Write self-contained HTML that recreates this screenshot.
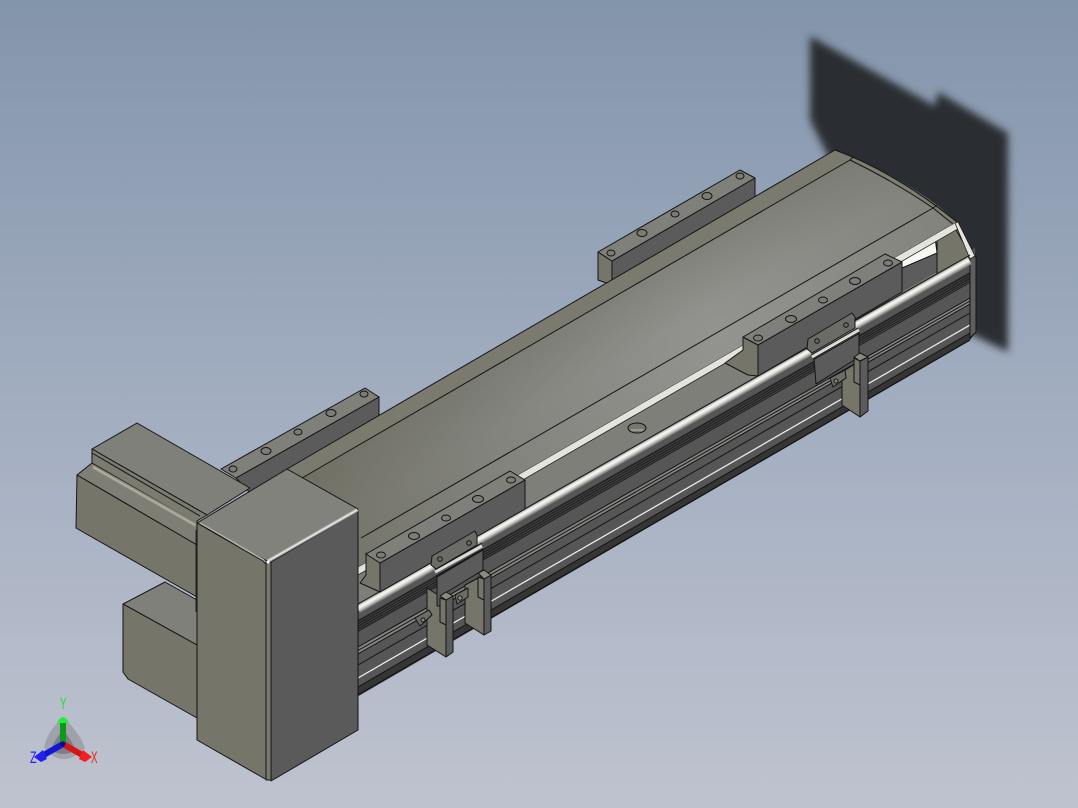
<!DOCTYPE html>
<html><head><meta charset="utf-8"><style>
html,body{margin:0;padding:0;width:1078px;height:808px;overflow:hidden;background:#a0abbd}
svg{display:block}
text{font-family:"Liberation Sans",sans-serif;font-size:16.5px}
.k{stroke:#141414;stroke-width:1;stroke-linejoin:round}
.l{stroke:#141414;stroke-width:1;fill:none}
.o{fill:#75756a}.d{fill:#5b5b5b}.t{fill:#7f807a}
.h{fill:#7c7c75;stroke:#141414;stroke-width:1}
</style></head><body>
<svg width="1078" height="808" viewBox="0 0 1078 808" xmlns="http://www.w3.org/2000/svg">
<defs>
<linearGradient id="bg" x1="0" y1="0" x2="0" y2="1"><stop offset="0" stop-color="#8395ab"/><stop offset=".5" stop-color="#a2adc0"/><stop offset="1" stop-color="#bfc3cf"/></linearGradient>
<radialGradient id="top" gradientUnits="userSpaceOnUse" cx="720" cy="340" r="430"><stop offset="0" stop-color="#93948f"/><stop offset=".5" stop-color="#858680"/><stop offset="1" stop-color="#75756a"/></radialGradient>
<linearGradient id="shade" gradientUnits="userSpaceOnUse" x1="650" y1="250" x2="690" y2="320"><stop offset="0" stop-color="#64645a" stop-opacity=".4"/><stop offset="1" stop-color="#64645a" stop-opacity="0"/></linearGradient>
<linearGradient id="rod" x1="0" y1="0" x2="0" y2="1"><stop offset="0" stop-color="#666"/><stop offset=".2" stop-color="#d8d8d4"/><stop offset=".4" stop-color="#fafaf6"/><stop offset=".65" stop-color="#d0d0cc"/><stop offset="1" stop-color="#6a6a68"/></linearGradient>
<linearGradient id="cap" x1="0" y1="0" x2="0" y2="1"><stop offset="0" stop-color="#8a8a84"/><stop offset=".5" stop-color="#f4f4f0"/><stop offset="1" stop-color="#707070"/></linearGradient>
<linearGradient id="band" x1="0" y1="0" x2="0" y2="1"><stop offset="0" stop-color="#77776c"/><stop offset=".5" stop-color="#b4b4aa"/><stop offset="1" stop-color="#78786e"/></linearGradient>
<filter id="b" x="-10%" y="-10%" width="120%" height="120%"><feGaussianBlur stdDeviation="4"/></filter>
</defs>
<rect width="1078" height="808" fill="url(#bg)"/>

<!-- shadow -->
<path d="M810 36L935 106L938 92L1008 133V352L900 300L810 120Z" fill="#2a2d32" filter="url(#b)"/>

<!-- back-right block -->
<path class="k o" d="M598 252L612 261V285L598 280Z"/>
<path class="k d" d="M612 261L755 178V205L612 290Z"/>
<path class="k t" d="M598 252L740 170L755 178L612 261Z"/>
<g class="h"><ellipse cx="611" cy="253" rx="4" ry="3"/><ellipse cx="642" cy="233" rx="5" ry="3.5"/><ellipse cx="675" cy="214" rx="4" ry="3"/><ellipse cx="707" cy="196" rx="5" ry="3.5"/><ellipse cx="740" cy="176" rx="4" ry="3"/></g>

<!-- back-left block -->
<path class="k d" d="M236 478L379 397V420L252 495Z"/>
<path class="k t" d="M221 469L365 388L379 397L236 478Z"/>
<g class="h"><ellipse cx="233" cy="469" rx="4" ry="3"/><ellipse cx="266" cy="451" rx="5" ry="3.5"/><ellipse cx="298" cy="432" rx="4" ry="3"/><ellipse cx="331" cy="413" rx="5" ry="3.5"/><ellipse cx="364" cy="394" rx="4" ry="3"/></g>

<!-- body side -->
<path d="M340 614L975 248L976 332L970 340L340 707Z" fill="#565656"/>
<path d="M358 687L970 333L976 332L970 340L358 695Z" fill="#353535"/>
<path d="M358 620L970 272V283L358 632Z" fill="#232323"/>
<g stroke="#4c4c4c" stroke-width=".7"><path d="M358 622.5L970 274.5M358 625L970 277M358 627.5L970 279.5M358 630L970 281.5"/></g>
<path d="M358 647L970 298V304L358 654Z" fill="#83837f"/>
<g class="l"><path d="M358 647L970 298M358 650.5L970 301M358 654L970 304M358 665L970 313M358 687L970 333"/></g>
<path d="M358 678L970 325" stroke="#f4f4f4" stroke-width="1.2"/>
<path d="M358 695L970 340" stroke="#111" stroke-width="1.2"/>
<path d="M970 258L976 256V332L970 338Z" fill="#5f5f5f" stroke="#141414"/>

<!-- lower surface -->
<path d="M340 585L960 228L974 254L340 618Z" fill="#7e7f78"/>
<!-- end pocket -->
<path d="M902 267L937 247V272L902 292Z" fill="#5c5c5c"/>
<path d="M937 240L955 228L971 256L937 275Z" class="k o"/>
<path d="M900 256L935 237L937 253L902 268Z" fill="#f8f8f4" stroke="#141414"/>
<!-- white strip -->
<path d="M340 577.4L955 222.6L960 227.7L340 585.4Z" fill="#e4e4dc" stroke="#222" stroke-width=".8"/>
<!-- top -->
<path d="M287 469L835 150Q895 172 957 221.5L340 577.4V560Z" fill="url(#top)"/>
<path d="M287 469L835 150Q895 172 957 221.5L340 577.4V560Z" fill="url(#shade)"/>
<path d="M287 469L835 150L853 157L302 478Z" fill="#7a7a6e"/>
<path d="M853 157Q900 178 937 205L957 222L951 226L933 208Q895 182 850 160Z" fill="#7d7d72"/>
<path class="l" d="M287 469L835 150Q895 172 957 222M302 478L850 160M361 538L933 208M850 160L853 157M933 208L937 205"/>
<path class="l" d="M850 160Q895 182 933 208L953 224"/>
<path d="M955 223L958 222L975 256L970 259Z" fill="#e6e6de" stroke="#222" stroke-width=".8"/>
<ellipse cx="637" cy="428" rx="9" ry="5" fill="#77776c" stroke="#141414"/>
<path d="M631 430h12" stroke="#9a9a90" stroke-width="2"/>
<!-- rod -->
<rect x="0" y="-4.4" width="704" height="8.8" fill="url(#rod)" transform="translate(358 609) rotate(-29.68)"/>
<path class="l" d="M358 604L970 255"/>

<!-- front block floor -->
<path class="k o" d="M366 553V575L360 583L380 592V563Z"/>
<path class="k d" d="M380 563L525 480V509L380 592Z"/>
<path class="k t" d="M366 554L510 471L525 480L380 563Z"/>
<g class="h"><ellipse cx="381" cy="555" rx="4.5" ry="3"/><ellipse cx="414" cy="536" rx="5.5" ry="3.5"/><ellipse cx="446" cy="518" rx="4.5" ry="3"/><ellipse cx="478" cy="499" rx="5.5" ry="3.5"/><ellipse cx="511" cy="480" rx="4.5" ry="3"/></g>

<!-- right block -->
<path class="k o" d="M743 337V350L725 363L748 375L758 376V345Z"/>
<path class="k d" d="M758 345L902 262V292L758 376Z"/>
<path class="k t" d="M743 337L885 254L902 262L758 345Z"/>
<g class="h"><ellipse cx="758" cy="338" rx="4.5" ry="3"/><ellipse cx="791" cy="319" rx="5.5" ry="3.5"/><ellipse cx="823" cy="300" rx="4.5" ry="3"/><ellipse cx="855" cy="281" rx="5.5" ry="3.5"/><ellipse cx="888" cy="263" rx="4.5" ry="3"/></g>

<!-- left bracket group -->
<path class="k o" d="M465 585L484 575V635L465 623Z"/>
<path class="k o" d="M427 588L446 600V657L427 645Z"/>
<path class="k" fill="#6d6d68" d="M455 595L468 588V597L457 604Z"/>
<circle cx="460" cy="598" r="2.2" fill="#8a8a82" stroke="#141414"/>
<path class="k" fill="#6d6d68" d="M415 618L429 610L432 615L420 626Z"/>
<circle cx="423" cy="620" r="2" fill="#8a8a82" stroke="#141414"/>
<path class="k d" d="M437 577L483 550V570L447 592V606L437 606Z"/>
<path class="k" fill="#6b6b67" d="M432 556L475 531L477 535V545L436 569L431 565Z"/>
<circle cx="440" cy="559" r="2.3" fill="#6b6b67" stroke="#141414"/>
<circle cx="469" cy="543" r="2.3" fill="#6b6b67" stroke="#141414"/>
<path d="M435 572L482 546" stroke="#dcdcd6" stroke-width="3"/>
<path class="l" d="M435 570L482 543M436 576L483 549"/>
<path class="k o" d="M478 577L484 579V600L478 597Z"/>
<path class="k d" d="M484 579L491 575V631L484 635Z"/>
<path class="k" fill="#8a8a80" d="M478 573L484 570L491 575L484 579Z"/>
<path class="k o" d="M440 598L446 600V625L440 622Z"/>
<path class="k d" d="M446 600L453 596V652L446 657Z"/>
<path class="k" fill="#8a8a80" d="M440 596L446 592L453 596L446 600Z"/>

<!-- right bracket group -->
<path class="k o" d="M842 372L860 361V417L842 405Z"/>
<path class="k" fill="#6d6d68" d="M830 378L845 370L846 378L833 387Z"/>
<circle cx="836" cy="381" r="2" fill="#8a8a82" stroke="#141414"/>
<path class="k d" d="M814 358L859 332V357L816 384Z"/>
<path class="k" fill="#6b6b67" d="M808 339L852 313L855 317V328L812 353L807 349Z"/>
<circle cx="817" cy="341" r="2.3" fill="#6b6b67" stroke="#141414"/>
<circle cx="846" cy="325" r="2.3" fill="#6b6b67" stroke="#141414"/>
<path d="M812 357L859 330" stroke="#dcdcd6" stroke-width="3"/>
<path class="l" d="M811 355L858 328M813 360L860 333"/>
<path class="k o" d="M854 358L860 361V385L854 382Z"/>
<path class="k d" d="M860 361L868 357V411L860 417Z"/>
<path class="k" fill="#8a8a80" d="M854 357L860 353L868 357L860 361Z"/>

<!-- left housing -->
<path class="k t" d="M137 423L250 488L207 515L92 449Z"/>
<path class="k" fill="#7b7b70" d="M92 449L207 515L197 521V535L92 470Z"/>
<path class="k" fill="#7e7e74" d="M92 463L197 524V545L77 475Z"/>
<rect x="0" y="-2.5" width="118" height="5" fill="url(#band)" transform="translate(93 467) rotate(29.6)"/>
<path class="l" d="M92 453L200 516M78 479L197 548"/>
<path class="k o" d="M77 475L197 545V597L76 528Z"/>

<!-- lower motor -->
<path class="k t" d="M165 582L197 600V645L123 604Z"/>
<path class="k o" d="M123 604L197 645V718L128 679L123 672Z"/>

<!-- end cap -->
<path class="k" fill="#81827b" d="M197 523L287 469L358 509L267 561Z"/>
<path class="k o" d="M197 523L263 561L267 565V780L197 740Z"/>
<path class="k" fill="#787870" d="M266 562L271 562V780L266 780Z"/>
<path class="k" fill="#5a5a5a" d="M271 562L358 511V730L271 781Z"/>
<rect x="0" y="-2" width="103" height="4" fill="url(#cap)" transform="translate(268 561) rotate(-29.8)"/>
<path d="M200 523L264 560" stroke="#b0b0a6" stroke-width="1.5"/>
<circle cx="268" cy="562" r="1.5" fill="#fff"/>
<path d="M196 530V612" stroke="#141414" stroke-width="1" opacity=".8"/>

<!-- triad -->
<path d="M63 717Q80 733 85 748Q63 770 44 748Q46 733 63 717Z" fill="#8d9098" opacity=".6"/>
<path d="M63 730Q72 740 75 750Q63 758 51 750Q54 740 63 730Z" fill="#6c6f76" opacity=".7"/>
<path d="M63 744V722" stroke="#0a9a18" stroke-width="6"/>
<path d="M57 723Q63 711 69 723Z" fill="#22ee33"/>
<path d="M63 744L84 756" stroke="#d81515" stroke-width="6"/>
<path d="M83 750L92 757L85 762L79 759Z" fill="#ee2222"/>
<path d="M63 744L42 756" stroke="#1515d8" stroke-width="6"/>
<path d="M43 750L34 757L41 762L47 759Z" fill="#2222ee"/>
<circle cx="63" cy="744" r="2.5" fill="#0a0a80"/>
<text x="60" y="709" fill="#22dd33" textLength="6.5" lengthAdjust="spacingAndGlyphs">Y</text>
<text x="91" y="763" fill="#ee2222" textLength="6.5" lengthAdjust="spacingAndGlyphs">X</text>
<text x="30" y="763" fill="#2222ee" textLength="6.5" lengthAdjust="spacingAndGlyphs">Z</text>
</svg>
</body></html>
